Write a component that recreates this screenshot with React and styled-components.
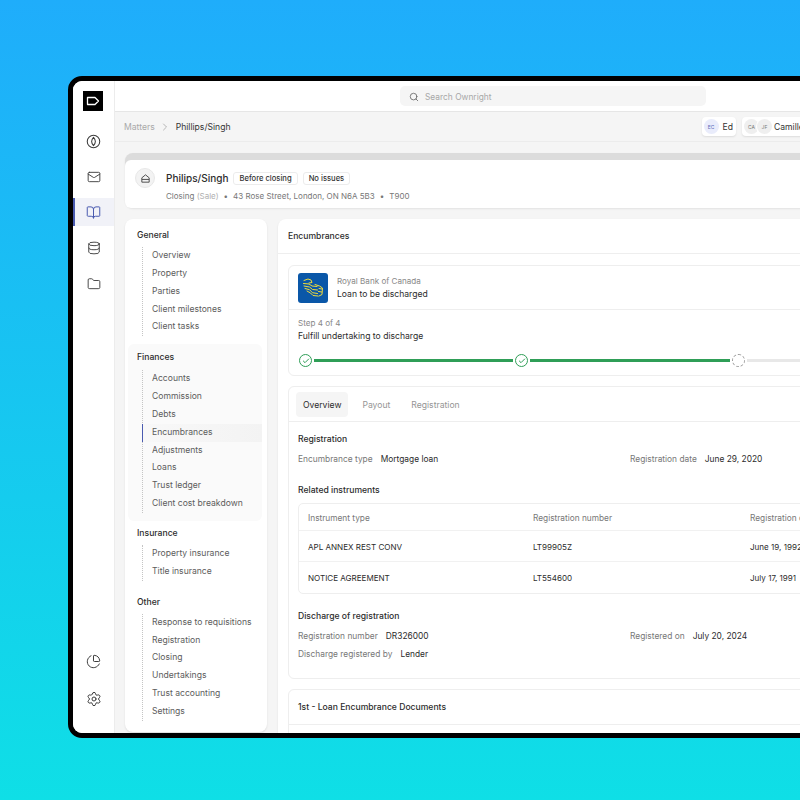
import React from "react";
import styled, { createGlobalStyle } from "styled-components";
import { Mail, BookOpen, Database, Folder, ChartPie, Settings, Search, ChevronRight, Check } from "lucide-react";

const GlobalStyle = createGlobalStyle`
  html, body {
    margin: 0;
    height: 800px;
    overflow: hidden;
    background: linear-gradient(180deg, #1fadfb 0%, #0fdfe6 100%);
    font-family: "Inter", "Noto Sans", sans-serif;
  }
`;

const Page = styled.div`
  height: 800px;
  padding: 76px 0 0 68px;
  box-sizing: border-box;
  overflow: hidden;
`;

const Frame = styled.div`
  width: 1000px;
  height: 662px;
  box-sizing: border-box;
  border: 5px solid #000;
  border-radius: 14px;
  background: #f5f5f5;
  display: flex;
  overflow: hidden;
`;

const Rail = styled.div`
  width: 42px;
  flex-shrink: 0;
  background: #fff;
  border-right: 1px solid #ececec;
  box-sizing: border-box;
  display: flex;
  flex-direction: column;
  align-items: stretch;
  padding: 10px 0 20px;
`;

const Logo = styled.div`
  width: 20px;
  height: 20px;
  background: #000;
  margin: 0 0 16px 10px;
  display: flex;
  align-items: center;
  justify-content: center;
`;

const RailItem = styled.div`
  height: 28px;
  margin-bottom: ${(p) => (p.$last ? 0 : p.$mb || 7.7)}px;
  display: flex;
  align-items: center;
  justify-content: center;
  color: ${(p) => (p.$active ? "#4a5bb0" : "#3d3d3d")};
  background: ${(p) => (p.$active ? "#f1f2f8" : "transparent")};
  border-left: 2px solid ${(p) => (p.$active ? "#4a5bb0" : "transparent")};
  border-right: 2px solid transparent;
`;

const RailSpacer = styled.div`
  flex: 1;
`;

const Workspace = styled.div`
  flex: 1;
  min-width: 0;
  display: flex;
  flex-direction: column;
`;

const TopBar = styled.div`
  height: 30px;
  flex-shrink: 0;
  background: #fff;
  border-bottom: 1px solid #e6e6e6;
  display: flex;
  justify-content: flex-start;
  align-items: center;
  padding-left: 285px;
`;

const SearchBox = styled.div`
  width: 306px;
  height: 20px;
  border-radius: 5px;
  background: #f5f5f5;
  display: flex;
  align-items: center;
  gap: 6px;
  padding: 1px 0 0 9px;
  box-sizing: border-box;
  font-size: 8.4px;
  color: #a8a8a8;
`;

const Crumbs = styled.div`
  height: 29px;
  flex-shrink: 0;
  border-bottom: 1px solid #ececec;
  display: flex;
  align-items: center;
  padding-left: 9px;
  font-size: 8.6px;
`;

const CrumbMuted = styled.span`
  color: #a9a9a9;
`;

const CrumbSep = styled.span`
  display: flex;
  margin: 0 5px 0 4px;
  color: #9b9b9b;
`;

const CrumbCurrent = styled.span`
  color: #333;
`;

const People = styled.div`
  display: flex;
  gap: 6px;
  margin-left: 471px;
`;

const PersonChip = styled.div`
  height: 19px;
  padding: 0 3px 0 2px;
  background: #fff;
  border-radius: 4px;
  box-shadow: 0 1px 2px rgba(0, 0, 0, 0.1);
  display: flex;
  align-items: center;
  gap: 4px;
  font-size: 8.6px;
  color: #333;
`;

const AvatarStack = styled.span`
  display: flex;
  margin-right: -2px;
`;

const Avatar = styled.span`
  width: 15px;
  height: 15px;
  border-radius: 50%;
  background: ${(p) => p.$bg || "#efefef"};
  color: ${(p) => p.$fg || "#777"};
  font-size: 5px;
  display: flex;
  align-items: center;
  justify-content: center;
  margin-left: ${(p) => (p.$stack ? "-2px" : "0")};
  box-shadow: ${(p) => (p.$stack ? "0 0 0 1px #fff" : "none")};
`;

const Content = styled.div`
  flex: 1;
  min-height: 0;
  padding: 11px 0 0 10px;
  display: flex;
  flex-direction: column;
  gap: 11px;
`;

const HeaderCard = styled.div`
  height: 55px;
  flex-shrink: 0;
  border-radius: 8px;
  background: #dcdcdc;
  padding-top: 7px;
  box-sizing: border-box;
  box-shadow: 0 1px 2px rgba(0, 0, 0, 0.08);
`;

const HeaderInner = styled.div`
  height: 48px;
  background: #fff;
  border-radius: 6px;
  display: flex;
  align-items: center;
  gap: 11px;
  padding-left: 10px;
  box-sizing: border-box;
`;

const HomeBadge = styled.div`
  width: 20px;
  height: 20px;
  box-sizing: border-box;
  margin-top: -12px;
  border-radius: 50%;
  background: #f3f3f3;
  border: 1px solid #e8e8e8;
  display: flex;
  align-items: center;
  justify-content: center;
`;

const HeaderText = styled.div`
  display: flex;
  flex-direction: column;
  gap: 6px;
  padding-top: 4px;
`;

const TitleRow = styled.div`
  display: flex;
  align-items: center;
  gap: 5px;
`;

const Title = styled.span`
  font-size: 10px;
  font-weight: 500;
  color: #2c2c2c;
`;

const Tag = styled.span`
  height: 11px;
  padding: 0 5px;
  border: 1px solid #ececec;
  border-radius: 3px;
  font-size: 7.6px;
  font-weight: 500;
  color: #333;
  display: flex;
  align-items: center;
`;

const MetaRow = styled.div`
  font-size: 8px;
  color: #777;
  display: flex;
  gap: 5px;
`;

const MetaFaint = styled.span`
  color: #b0b0b0;
`;

const Columns = styled.div`
  flex: 1;
  min-height: 0;
  display: flex;
  gap: 11px;
  align-items: stretch;
`;

const NavCard = styled.div`
  width: 142px;
  flex-shrink: 0;
  background: #fff;
  border-radius: 8px;
  box-shadow: 0 1px 2px rgba(0, 0, 0, 0.1);
  padding: 3px 5px 0 3px;
  box-sizing: border-box;
  margin-bottom: 1px;
`;

const NavGroup = styled.div`
  background: ${(p) => (p.$shaded ? "#fafafa" : "transparent")};
  border-radius: 6px;
  padding: 8px 0 8px 9px;
  margin-bottom: ${(p) => p.$gap || 0}px;
`;

const NavHeading = styled.div`
  font-size: 8.6px;
  font-weight: 500;
  color: #2c2c2c;
  height: 11px;
  line-height: 11px;
  margin-bottom: ${(p) => (p.$shaded ? 7 : 6)}px;
`;

const NavList = styled.div`
  border-left: 1px dotted #c4c4c4;
  margin-left: 5px;
`;

const NavItem = styled.div`
  height: 17.85px;
  line-height: 17.85px;
  padding-left: 9px;
  margin-left: -1px;
  font-size: 8.6px;
  color: #5c5c5c;
  border-left: 1px solid ${(p) => (p.$active ? "#4a5bb0" : "transparent")};
  background: ${(p) => (p.$active ? "linear-gradient(90deg, #f8f8f8, #f3f3f3)" : "transparent")};
`;

const MainCard = styled.div`
  flex: 1;
  min-width: 0;
  background: #fff;
  border-radius: 8px 0 0 0;
  box-shadow: 0 1px 2px rgba(0, 0, 0, 0.1);
  display: flex;
  flex-direction: column;
`;

const MainHeader = styled.div`
  height: 34px;
  flex-shrink: 0;
  border-bottom: 1px solid #eeeeee;
  display: flex;
  align-items: center;
  padding-left: 10px;
  font-size: 8.6px;
  font-weight: 500;
  color: #2c2c2c;
`;

const MainBody = styled.div`
  padding: 11px 0 0 10px;
  display: flex;
  flex-direction: column;
  gap: 10px;
`;

const Panel = styled.div`
  border: 1px solid #eeeeee;
  border-radius: 6px;
  background: #fff;
`;

const BankRow = styled.div`
  height: 43px;
  display: flex;
  align-items: center;
  gap: 9px;
  padding-left: 9px;
  border-bottom: 1px solid #eeeeee;
`;

const BankLogo = styled.div`
  width: 30px;
  height: 30px;
  border-radius: 3px;
  background: #0a57a8;
  display: flex;
  align-items: center;
  justify-content: center;
`;

const TwoLine = styled.div`
  display: flex;
  flex-direction: column;
  gap: 3px;
`;

const SmallMuted = styled.span`
  font-size: 8.1px;
  line-height: 10px;
  color: #888;
`;

const SmallDark = styled.span`
  font-size: 8.6px;
  line-height: 11px;
  color: #2c2c2c;
`;

const StepBox = styled.div`
  padding: 8px 0 0 9px;
  height: 65px;
  box-sizing: border-box;
`;

const Stepper = styled.div`
  display: flex;
  align-items: center;
  margin: 12px 0 0 1px;
  gap: 2px;
`;

const StepCircle = styled.span`
  width: 13px;
  height: 13px;
  box-sizing: border-box;
  flex-shrink: 0;
  border-radius: 50%;
  border: 1px ${(p) => (p.$pending ? "dashed #9a9a9a" : "solid #2f9e57")};
  color: #2f9e57;
  display: flex;
  align-items: center;
  justify-content: center;
`;

const StepLine = styled.span`
  height: 3px;
  width: ${(p) => p.$w}px;
  background: ${(p) => (p.$done ? "#2f9e57" : "#e8e8e8")};
`;

const Tabs = styled.div`
  height: 35px;
  box-sizing: border-box;
  padding: 1px 0 0 7px;
  border-bottom: 1px solid #eeeeee;
  display: flex;
  align-items: center;
  gap: 7px;
`;

const Tab = styled.span`
  font-size: 8.6px;
  color: ${(p) => (p.$active ? "#2c2c2c" : "#959595")};
  background: ${(p) => (p.$active ? "#f5f5f5" : "transparent")};
  padding: 7.5px 7px;
  border-radius: 4px;
`;

const PanelBody = styled.div`
  padding: 12px 0 0 9px;
  height: 244px;
`;

const SectionTitle = styled.div`
  font-size: 8.6px;
  font-weight: 500;
  color: #2c2c2c;
  height: 11px;
  line-height: 11px;
  margin-bottom: ${(p) => p.$mb || 9}px;
`;

const FieldRow = styled.div`
  display: grid;
  grid-template-columns: 332px 1fr;
  height: 11px;
  line-height: 11px;
  margin-bottom: ${(p) => p.$mb || 0}px;
`;

const Field = styled.div`
  display: flex;
  gap: 8px;
  font-size: 8.4px;
`;

const FieldLabel = styled.span`
  color: #777;
`;

const FieldValue = styled.span`
  color: #2c2c2c;
`;

const Table = styled.div`
  border: 1px solid #eeeeee;
  border-radius: 5px;
  margin-bottom: 17px;
`;

const TableRow = styled.div`
  display: grid;
  grid-template-columns: 225px 217px 1fr;
  box-sizing: border-box;
  height: ${(p) => p.$h}px;
  align-items: center;
  padding: 1px 0 0 9px;
  border-bottom: 1px solid ${(p) => (p.$last ? "transparent" : "#f1f1f1")};
  font-size: ${(p) => (p.$head ? 8.3 : 8.05)}px;
  color: ${(p) => (p.$head ? "#777" : "#2c2c2c")};
  white-space: nowrap;
`;

const DocsPanel = styled(Panel)`
  height: 60px;
  border-radius: 6px 0 0 0;
`;

const DocsHead = styled.div`
  height: 34px;
  border-bottom: 1px solid #eeeeee;
  display: flex;
  align-items: center;
  padding-left: 9px;
  font-size: 8.6px;
  font-weight: 500;
  color: #2c2c2c;
`;

const CompassIcon = () => (
  <svg width="15" height="15" viewBox="0 0 24 24" fill="none" stroke="currentColor" strokeWidth="1.7" strokeLinejoin="round">
    <circle cx="12" cy="12" r="10" />
    <path d="M12 5.5c2 2.2 3 4.2 3 6.5s-1 4.3-3 6.5c-2-2.2-3-4.2-3-6.5s1-4.3 3-6.5z" />
  </svg>
);

const LogoMark = () => (
  <svg width="14" height="10" viewBox="0 0 14 10" fill="none" stroke="#fff" strokeWidth="1.3" strokeLinejoin="round">
    <path d="M1.5 1.5h7.5l3.5 3.5-3.5 3.5H1.5z" />
  </svg>
);

const HomeIcon = () => (
  <svg width="11" height="11" viewBox="0 0 24 24" fill="none" stroke="#444" strokeWidth="2" strokeLinejoin="round">
    <path d="M4 20V10.5L12 4l8 6.5V20z" />
    <path d="M4 14h16" />
  </svg>
);

const RbcMark = () => (
  <svg width="26" height="26" viewBox="0 0 26 26" fill="none" stroke="#f2dc3a" strokeWidth="1" strokeLinecap="round" strokeLinejoin="round">
    <path d="M4 5.5 8 4l3 1 1 2.5-3 .5" />
    <path d="M3.5 8.5 9 9l3 2 5 .5" />
    <path d="M4 11l5.5 1 3 2.5 5 .5" />
    <path d="M5 13.5l4.5 1.2 3 3 5 .8" />
    <path d="M7 16l3.5 2 2.5 2.5 5 .5" />
    <path d="M15 9.5l4.5 1.5 3 2-.5 6.5-3 1.5" />
    <path d="M19 13.5l3 .5M18.5 16.5l3.2.5" />
  </svg>
);

const nav = [
  { title: "General", items: ["Overview", "Property", "Parties", "Client milestones", "Client tasks"], gap: 0 },
  { title: "Finances", shaded: true, items: ["Accounts", "Commission", "Debts", "Encumbrances", "Adjustments", "Loans", "Trust ledger", "Client cost breakdown"], gap: -1 },
  { title: "Insurance", items: ["Property insurance", "Title insurance"], gap: 0 },
  { title: "Other", items: ["Response to requisitions", "Registration", "Closing", "Undertakings", "Trust accounting", "Settings"], gap: 0 },
];

const App = () => {
  return (
    <Page>
      <GlobalStyle />
      <Frame>
        <Rail>
          <Logo><LogoMark /></Logo>
          <RailItem><CompassIcon /></RailItem>
          <RailItem><Mail size={14} strokeWidth={1.6} /></RailItem>
          <RailItem $active><BookOpen size={15} strokeWidth={1.6} /></RailItem>
          <RailItem><Database size={14} strokeWidth={1.6} /></RailItem>
          <RailItem><Folder size={14} strokeWidth={1.6} /></RailItem>
          <RailSpacer />
          <RailItem $mb={10}><ChartPie size={15} strokeWidth={1.6} /></RailItem>
          <RailItem $last><Settings size={16} strokeWidth={1.5} /></RailItem>
        </Rail>
        <Workspace>
          <TopBar>
            <SearchBox>
              <Search size={10} strokeWidth={2} color="#666" />
              Search Ownright
            </SearchBox>
          </TopBar>
          <Crumbs>
            <CrumbMuted>Matters</CrumbMuted>
            <CrumbSep><ChevronRight size={12} strokeWidth={1.4} /></CrumbSep>
            <CrumbCurrent>Phillips/Singh</CrumbCurrent>
            <People>
              <PersonChip>
                <Avatar $bg="#e9ecfb" $fg="#5a6ab8">EC</Avatar>
                Ed
              </PersonChip>
              <PersonChip>
                <AvatarStack>
                  <Avatar>CA</Avatar>
                  <Avatar $stack>JF</Avatar>
                </AvatarStack>
                Camille
              </PersonChip>
            </People>
          </Crumbs>
          <Content>
            <HeaderCard>
              <HeaderInner>
                <HomeBadge><HomeIcon /></HomeBadge>
                <HeaderText>
                  <TitleRow>
                    <Title>Philips/Singh</Title>
                    <Tag>Before closing</Tag>
                    <Tag>No issues</Tag>
                  </TitleRow>
                  <MetaRow>
                    <span>Closing <MetaFaint>(Sale)</MetaFaint></span>
                    <span>•</span>
                    <span>43 Rose Street, London, ON N6A 5B3</span>
                    <span>•</span>
                    <span>T900</span>
                  </MetaRow>
                </HeaderText>
              </HeaderInner>
            </HeaderCard>
            <Columns>
              <NavCard>
                {nav.map((group) => (
                  <NavGroup key={group.title} $shaded={group.shaded} $gap={group.gap}>
                    <NavHeading $shaded={group.shaded}>{group.title}</NavHeading>
                    <NavList>
                      {group.items.map((item) => (
                        <NavItem key={item} $active={item === "Encumbrances"}>{item}</NavItem>
                      ))}
                    </NavList>
                  </NavGroup>
                ))}
              </NavCard>
              <MainCard>
                <MainHeader>Encumbrances</MainHeader>
                <MainBody>
                  <Panel>
                    <BankRow>
                      <BankLogo><RbcMark /></BankLogo>
                      <TwoLine>
                        <SmallMuted>Royal Bank of Canada</SmallMuted>
                        <SmallDark>Loan to be discharged</SmallDark>
                      </TwoLine>
                    </BankRow>
                    <StepBox>
                      <TwoLine>
                        <SmallMuted>Step 4 of 4</SmallMuted>
                        <SmallDark>Fulfill undertaking to discharge</SmallDark>
                      </TwoLine>
                      <Stepper>
                        <StepCircle><Check size={8} strokeWidth={3} /></StepCircle>
                        <StepLine $done $w={199} />
                        <StepCircle><Check size={8} strokeWidth={3} /></StepCircle>
                        <StepLine $done $w={199.5} />
                        <StepCircle $pending />
                        <StepLine $w={200} />
                      </Stepper>
                    </StepBox>
                  </Panel>
                  <Panel>
                    <Tabs>
                      <Tab $active>Overview</Tab>
                      <Tab>Payout</Tab>
                      <Tab>Registration</Tab>
                    </Tabs>
                    <PanelBody>
                      <SectionTitle>Registration</SectionTitle>
                      <FieldRow $mb={20}>
                        <Field><FieldLabel>Encumbrance type</FieldLabel><FieldValue>Mortgage loan</FieldValue></Field>
                        <Field><FieldLabel>Registration date</FieldLabel><FieldValue>June 29, 2020</FieldValue></Field>
                      </FieldRow>
                      <SectionTitle $mb={7}>Related instruments</SectionTitle>
                      <Table>
                        <TableRow $head $h={27}>
                          <span>Instrument type</span><span>Registration number</span><span>Registration date</span>
                        </TableRow>
                        <TableRow $h={31}>
                          <span>APL ANNEX REST CONV</span><span>LT99905Z</span><span>June 19, 1992</span>
                        </TableRow>
                        <TableRow $h={31} $last>
                          <span>NOTICE AGREEMENT</span><span>LT554600</span><span>July 17, 1991</span>
                        </TableRow>
                      </Table>
                      <SectionTitle>Discharge of registration</SectionTitle>
                      <FieldRow $mb={7}>
                        <Field><FieldLabel>Registration number</FieldLabel><FieldValue>DR326000</FieldValue></Field>
                        <Field><FieldLabel>Registered on</FieldLabel><FieldValue>July 20, 2024</FieldValue></Field>
                      </FieldRow>
                      <FieldRow>
                        <Field><FieldLabel>Discharge registered by</FieldLabel><FieldValue>Lender</FieldValue></Field>
                      </FieldRow>
                    </PanelBody>
                  </Panel>
                  <DocsPanel>
                    <DocsHead>1st - Loan Encumbrance Documents</DocsHead>
                  </DocsPanel>
                </MainBody>
              </MainCard>
            </Columns>
          </Content>
        </Workspace>
      </Frame>
    </Page>
  );
};

export default App;
